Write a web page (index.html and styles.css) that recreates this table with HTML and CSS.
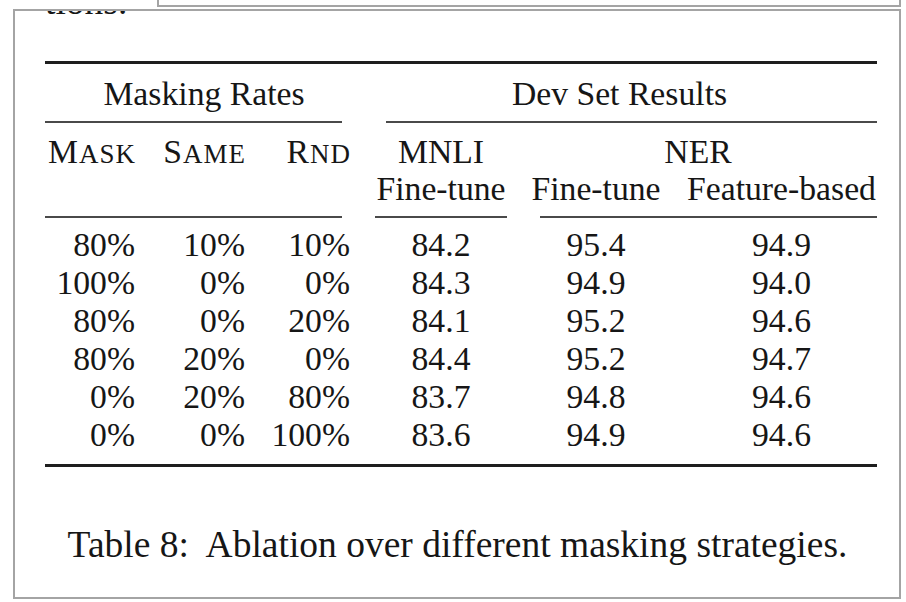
FILE: index.html
```html
<!DOCTYPE html>
<html lang="en">
<head>
<meta charset="utf-8">
<title>Table 8</title>
<link rel="stylesheet" href="styles.css">
</head>
<body>
<div class="topbox"></div>
<div class="frame">
  <div class="clip"><p class="prev">tions.</p></div>
  <div class="tbl">
    <div class="rule thick"></div>
    <div class="row grp">
      <div class="span-mask">Masking Rates</div>
      <div class="span-dev">Dev Set Results</div>
    </div>
    <div class="row lines l1">
      <div class="ln ln-mask"></div>
      <div class="ln ln-dev"></div>
    </div>
    <div class="row head">
      <div class="sc c1 r1">M<span class="small">ASK</span></div>
      <div class="sc c2 r1">S<span class="small">AME</span></div>
      <div class="sc c3 r1">R<span class="small">ND</span></div>
      <div class="c5 r1">MNLI</div>
      <div class="ner r1">NER</div>
      <div class="c5 r2">Fine-tune</div>
      <div class="c7 r2">Fine-tune</div>
      <div class="c9 r2">Feature-based</div>
    </div>
    <div class="row lines l2">
      <div class="ln ln-mask"></div>
      <div class="ln ln-mnli"></div>
      <div class="ln ln-ner"></div>
    </div>
    <div class="row data">
      <div class="c1 num">80%</div><div class="c2 num">10%</div><div class="c3 num">10%</div><div class="c5">84.2</div><div class="c7">95.4</div><div class="c9">94.9</div>
      <div class="c1 num">100%</div><div class="c2 num">0%</div><div class="c3 num">0%</div><div class="c5">84.3</div><div class="c7">94.9</div><div class="c9">94.0</div>
      <div class="c1 num">80%</div><div class="c2 num">0%</div><div class="c3 num">20%</div><div class="c5">84.1</div><div class="c7">95.2</div><div class="c9">94.6</div>
      <div class="c1 num">80%</div><div class="c2 num">20%</div><div class="c3 num">0%</div><div class="c5">84.4</div><div class="c7">95.2</div><div class="c9">94.7</div>
      <div class="c1 num">0%</div><div class="c2 num">20%</div><div class="c3 num">80%</div><div class="c5">83.7</div><div class="c7">94.8</div><div class="c9">94.6</div>
      <div class="c1 num">0%</div><div class="c2 num">0%</div><div class="c3 num">100%</div><div class="c5">83.6</div><div class="c7">94.9</div><div class="c9">94.6</div>
    </div>
    <div class="rule thick bottom"></div>
    <p class="caption">Table 8:&nbsp; Ablation over different masking strategies.</p>
  </div>
</div>
</body>
</html>
```

FILE: styles.css
```css
html, body {
  margin: 0;
  padding: 0;
  background: #ffffff;
  overflow: hidden;
}

body {
  font-family: "Liberation Serif", "Times New Roman", serif;
  color: #161616;
}

.topbox {
  box-sizing: border-box;
  margin-left: 157px;
  width: 744px;
  height: 7px;
  border: 2px solid #a4a4a4;
  border-top: none;
}

.frame {
  box-sizing: border-box;
  margin: 2px 0 0 13px;
  width: 888px;
  height: 590px;
  border: 2px solid #a4a4a4;
  padding: 0 22px 0 30px;
  overflow: hidden;
}

.clip {
  height: 5px;
  overflow: hidden;
}

.prev {
  margin: -29px 0 0 0;
  font-size: 37.5px;
  line-height: 40px;
}

.tbl {
  width: 832px;
  font-size: 33.7px;
}

.rule.thick {
  height: 3px;
  background: #1e1e1e;
  margin-top: 45px;
}

.rule.bottom {
  margin-top: 10px;
}

.row {
  display: grid;
  grid-template-columns: 90px 110px 105px 25px 132px 24px 130px 25px 191px;
}

.grp {
  margin-top: 11px;
  line-height: 38px;
}

.span-mask {
  grid-column: 1 / 4;
  text-align: center;
  padding-left: 13px;
}

.span-dev {
  grid-column: 5 / 10;
  text-align: center;
  padding-right: 13px;
}

.lines .ln {
  height: 2px;
  background: #4a4a4a;
}

.l1 {
  margin-top: 8px;
}

.l2 {
  margin-top: 9px;
}

.ln-mask {
  grid-column: 1 / 4;
  margin-right: 8px;
}

.ln-dev {
  grid-column: 5 / 10;
  margin-left: 11px;
}

.ln-mnli {
  grid-column: 5 / 6;
}

.ln-ner {
  grid-column: 7 / 10;
  margin-left: 9px;
}

.head {
  margin-top: 10px;
  line-height: 37px;
}

.r1 { grid-row: 1; }
.r2 { grid-row: 2; }

.sc {
  text-align: right;
  letter-spacing: 1px;
  margin-right: -1px;
}

.sc .small {
  font-size: 0.8em;
  line-height: 0;
}

.c1 { grid-column: 1; }
.c2 { grid-column: 2; }
.c3 { grid-column: 3; }
.c5 { grid-column: 5; text-align: center; }
.c7 { grid-column: 7; text-align: center; }
.c9 { grid-column: 9; text-align: center; }

.ner {
  grid-column: 7 / 10;
  text-align: center;
  padding-right: 12px;
}

.data {
  margin-top: 8px;
  line-height: 38px;
}

.num {
  text-align: right;
}

.caption {
  margin: 56px 0 0 0;
  font-size: 37.5px;
  line-height: 44px;
  text-align: center;
  padding-right: 7px;
}
```
